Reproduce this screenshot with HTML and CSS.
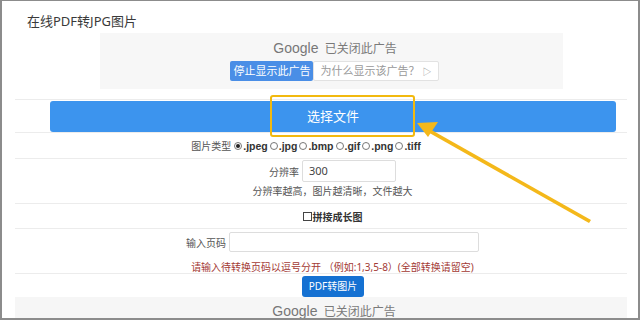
FILE: index.html
```html
<!DOCTYPE html>
<html lang="zh-CN">
<head>
<meta charset="utf-8">
<title>在线PDF转JPG图片</title>
<link rel="stylesheet" href="styles.css">
</head>
<body>
<div class="frame">
  <h1 class="title">在线PDF转JPG图片</h1>
  <div class="ad">
    <div class="ad-head"><span class="g">Google</span> 已关闭此广告</div>
    <div class="ad-btns">
      <span class="ad-stop">停止显示此广告</span><span class="ad-why">为什么显示该广告？<span class="play">▷</span></span>
    </div>
  </div>
  <div class="main">
    <div class="row row-file">
      <div class="file-btn">选择文件</div>
    </div>
    <div class="row row-type">
      <span class="lbl">图片类型</span>
      <span class="opt"><i class="radio on"></i><b>.jpeg</b></span>
      <span class="opt"><i class="radio"></i><b>.jpg</b></span>
      <span class="opt"><i class="radio"></i><b>.bmp</b></span>
      <span class="opt"><i class="radio"></i><b>.gif</b></span>
      <span class="opt"><i class="radio"></i><b>.png</b></span>
      <span class="opt"><i class="radio"></i><b>.tiff</b></span>
    </div>
    <div class="row row-dpi">
      <div class="dpi-line"><span class="lbl">分辨率</span><span class="input dpi">300</span></div>
      <div class="hint">分辨率越高，图片越清晰，文件越大</div>
    </div>
    <div class="row row-merge">
      <span class="check"></span><b>拼接成长图</b>
    </div>
    <div class="row row-pages">
      <div class="pages-line"><span class="lbl">输入页码</span><span class="input pages"></span></div>
      <div class="warn">请输入待转换页码以逗号分开 （例如:1,3,5-8）(全部转换请留空)</div>
    </div>
    <div class="row row-submit">
      <div class="submit">PDF转图片</div>
    </div>
    <div class="ad-bottom"><span class="g">Google</span> 已关闭此广告</div>
  </div>
  <div class="highlight"></div>
  <svg class="arrow" width="640" height="320" viewBox="0 0 640 320">
    <polygon points="589,223 591,220 428,128 426,131" fill="#f4b81a"/>
    <polygon points="417,123 438,122 428,137" fill="#f4b81a"/>
  </svg>
</div>
</body>
</html>
```

FILE: styles.css
```css
* { box-sizing: border-box; }
html, body { margin: 0; padding: 0; background: #fff; }
body {
  font-family: "Noto Sans", "Noto Sans CJK SC", sans-serif;
  color: #333;
}
.frame {
  position: relative;
  width: 640px;
  height: 320px;
  overflow: hidden;
  border: 2px solid #8c8c8c;
  border-top-width: 1px;
  background: #fff;
}
.title {
  margin: 10px 0 0 25px;
  font-size: 13px;
  font-weight: normal;
  line-height: 20px;
  color: #3a3a3a;
}
.ad {
  margin: 2px 0 0 98px;
  width: 463px;
  height: 56px;
  background: #f7f7f7;
  padding-top: 7px;
  text-align: center;
}
.ad-head {
  font-size: 12px;
  line-height: 17px;
  color: #7a7a7a;
  padding-left: 7px;
}
.g {
  font-family: "Liberation Sans", Arial, sans-serif;
  font-size: 14px;
  color: #777;
  margin-right: 3px;
}
.ad-btns {
  display: flex;
  justify-content: center;
  margin-top: 4px;
  padding-left: 6px;
}
.ad-stop {
  background: #4a8ee6;
  color: #fff;
  font-size: 11px;
  line-height: 20px;
  height: 20px;
  padding: 0 3px;
  border-radius: 2px;
}
.ad-why {
  background: #fff;
  color: #999;
  font-size: 11px;
  line-height: 18px;
  height: 20px;
  padding: 0 6px;
  border: 1px solid #e2e2e2;
  border-radius: 2px;
}
.play { font-size: 9px; margin-left: 3px; }
.main {
  margin: 10px 0 0 13px;
  width: 612px;
}
.row {
  border-top: 1px solid #ececec;
  display: flex;
  justify-content: center;
  align-items: center;
  font-size: 10px;
  color: #555;
}
.row-file {
  height: 33px;
  padding: 1px 11px 0 35px;
  align-items: flex-start;
}
.file-btn {
  width: 100%;
  height: 31px;
  background: #3c94ee;
  color: #fff;
  font-size: 13px;
  line-height: 31px;
  text-align: center;
  border-radius: 3px;
}
.row-type {
  height: 26px;
  padding-right: 30px;
}
.row-type .lbl { margin-right: 3px; }
.opt { display: inline-flex; align-items: center; margin-right: 2px; }
.opt:last-child { margin-right: 0; }
.opt b { font-family: "Liberation Sans", Arial, sans-serif; font-weight: bold; color: #333; font-size: 10.5px; }
.radio {
  display: inline-block;
  width: 8px;
  height: 8px;
  border: 1px solid #777;
  border-radius: 50%;
  position: relative;
  margin-right: 1px;
}
.radio.on::after {
  content: "";
  position: absolute;
  left: 1px; top: 1px;
  width: 4px; height: 4px;
  border-radius: 50%;
  background: #222;
}
.row-dpi, .row-pages {
  flex-direction: column;
  height: 45px;
  justify-content: flex-start;
  padding-left: 23px;
}
.dpi-line, .pages-line { display: flex; align-items: center; margin-top: 1px; }
.dpi-line .lbl, .pages-line .lbl { margin-right: 3px; }
.input {
  display: inline-block;
  border: 1px solid #ddd;
  background: #fff;
  border-radius: 2px;
  color: #444;
  font-size: 11px;
  padding-left: 6px;
}
.dpi { width: 94px; height: 22px; line-height: 20px; }
.hint { margin-top: 2px; line-height: 15px; }
.row-merge { height: 25px; color: #333; padding-left: 23px; }
.row-merge b { font-weight: bold; font-size: 10px; }
.check {
  display: inline-block;
  width: 9px; height: 9px;
  border: 1px solid #444;
  margin-right: 1px;
}
.pages-line { margin-top: 3px; }
.pages { width: 250px; height: 20px; }
.warn { color: #a33a35; margin-top: 8px; line-height: 14px; }
.row-submit { height: 24px; align-items: flex-start; padding-top: 2px; padding-left: 24px; }
.submit {
  background: #1571d2;
  color: #fff;
  font-size: 10px;
  line-height: 21px;
  height: 21px;
  padding: 0 7px;
  border-radius: 3px;
}
.ad-bottom {
  background: #f6f6f6;
  height: 24px;
  text-align: center;
  color: #7a7a7a;
  font-size: 12px;
  line-height: 22px;
  padding-left: 26px;
  padding-top: 3px;
}
.highlight {
  position: absolute;
  left: 268px;
  top: 94px;
  width: 145px;
  height: 42px;
  border: 2px solid #f2b90f;
  border-radius: 3px;
}
.arrow { position: absolute; left: -2px; top: -1px; }
```
